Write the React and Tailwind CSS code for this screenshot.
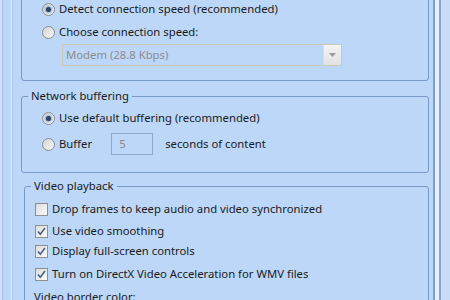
import { useState } from 'react'

function Radio({ checked, label }) {
  return (
    <div className="flex items-center h-[16px]">
      <span className="w-[13px] h-[13px] rounded-full border border-[#8d8d8d] bg-gradient-to-br from-[#d4d4d4] to-[#f8f8f8] flex items-center justify-center shrink-0">
        {checked && <span className="w-[5px] h-[5px] rounded-full bg-[#2b4566] shadow-[0_0_2px_1px_#7fa6d8]" />}
      </span>
      <span className="ml-[4px]">{label}</span>
    </div>
  )
}

function Check({ checked, label }) {
  return (
    <div className="flex items-center h-[16px]">
      <span className="w-[13px] h-[13px] border border-[#8e8f8f] bg-gradient-to-br from-[#dcdcdc] to-[#fbfbfb] flex items-center justify-center shrink-0">
        {checked && (
          <svg width="11" height="11" viewBox="0 0 11 11">
            <path d="M2 5.5 L4.3 8.2 L9 2" fill="none" stroke="#4b6283" strokeWidth="1.6" />
          </svg>
        )}
      </span>
      <span className="ml-[4px]">{label}</span>
    </div>
  )
}

export default function App() {
  const [buffer] = useState('5')
  return (
    <div className="w-[450px] h-[300px] overflow-hidden bg-[#bdd7f8] flex text-[11.3px] leading-[16px] text-[#1b1b1b]" style={{ fontFamily: '"Segoe UI", "Noto Sans", sans-serif' }}>
      {/* left frame */}
      <div className="w-[3px] bg-[#cfe2fb] border-r border-[#a4bfe3] shrink-0" />
      <div className="w-[8px] shrink-0" />
      <div className="w-[1px] bg-[#e4eefc] shrink-0" />
      <div className="w-[1px] bg-[#a9c3e7] shrink-0" />

      <div className="w-[420px] shrink-0 pl-[8px] pr-[4px] flex flex-col -mt-[12px]">
        {/* connection speed */}
        <div className="h-[93px] border border-[#7898c6] rounded-[3px] pl-[20px] pt-[12px] shrink-0">
          <Radio checked label="Detect connection speed (recommended)" />
          <div className="mt-[7px]">
            <Radio label="Choose connection speed:" />
          </div>
          <div className="mt-[4px] ml-[20px] w-[280px] h-[22px] border border-[#cac9bf] flex">
            <span className="flex-1 pl-[3px] flex items-center text-[#8d8d8d]">Modem (28.8 Kbps)</span>
            <span className="w-[18px] bg-gradient-to-b from-[#f4f4f4] to-[#e2e2e2] border-l border-[#dedcd2] flex items-center justify-center">
              <svg width="7" height="4" viewBox="0 0 7 4"><path d="M0 0 H7 L3.5 4 Z" fill="#9a9a9a" /></svg>
            </span>
          </div>
        </div>

        {/* network buffering */}
        <fieldset className="mt-[7px] h-[85px] border border-[#7898c6] rounded-[3px] pl-[20px] shrink-0">
          <legend className="-ml-[14px] px-[3px]">Network buffering</legend>
          <div className="mt-[6px]">
            <Radio checked label="Use default buffering (recommended)" />
          </div>
          <div className="mt-[7px] flex items-center h-[22px]">
            <Radio label="Buffer" />
            <span className="ml-[19px] w-[42px] h-[22px] border border-[#8ea9d0] pl-[7px] flex items-center text-[#8a8a8a]">{buffer}</span>
            <span className="ml-[12px]">seconds of content</span>
          </div>
        </fieldset>

        {/* video playback */}
        <fieldset className="mt-[5px] ml-[3px] border border-[#7898c6] rounded-[3px] pl-[10px] shrink-0">
          <legend className="-ml-[4px] px-[3px]">Video playback</legend>
          <div className="mt-[7px] flex flex-col">
            <Check label="Drop frames to keep audio and video synchronized" />
            <div className="mt-[6px]"><Check checked label="Use video smoothing" /></div>
            <div className="mt-[4px]"><Check checked label="Display full-screen controls" /></div>
            <div className="mt-[7px]"><Check checked label="Turn on DirectX Video Acceleration for WMV files" /></div>
            <div className="mt-[7px] -ml-[1px]">Video border color:</div>
          </div>
        </fieldset>
      </div>

      {/* right frame */}
      <div className="w-[2px] bg-[#7d9fcf] shrink-0" />
      <div className="w-[4px] bg-[#e6effc] shrink-0" />
      <div className="w-[2px] bg-[#87a5d0] shrink-0" />
      <div className="flex-1 bg-[#c9ddf8]" />
    </div>
  )
}
